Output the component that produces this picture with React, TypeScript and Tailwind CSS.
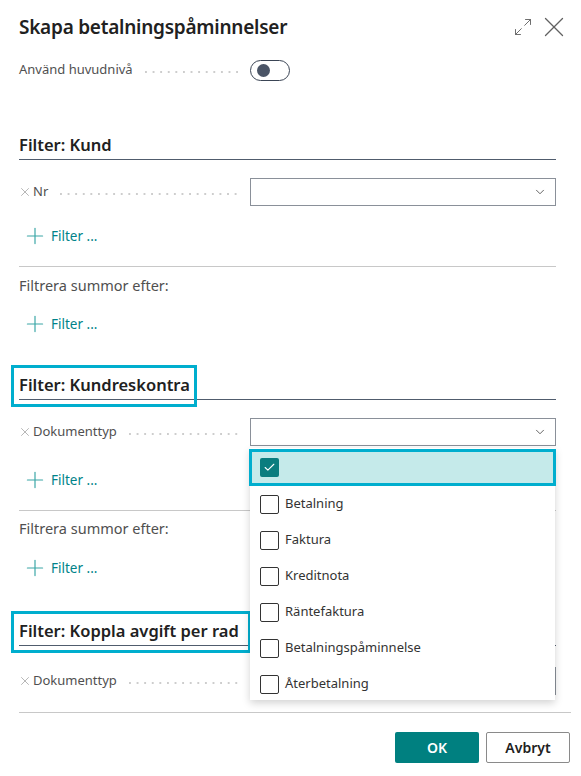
import { X, Maximize2, ChevronDown, Plus, Check } from 'lucide-react';

const font = { fontFamily: '"Segoe UI", "Noto Sans", sans-serif' };

function Leader() {
  return (
    <div className="flex-1 h-[2px] mt-[3px] ml-[12px] mr-2 bg-[linear-gradient(to_right,#cdcdcd_2px,transparent_2px)] bg-[length:7.6px_2px] bg-repeat-x" />
  );
}

function FieldRow({ label }: { label: string }) {
  return (
    <div className="flex items-center h-[28px]">
      <div className="flex items-center w-[231px]">
        <X className="w-[14px] h-[14px] text-[#8f8f8f] -ml-[1px] mr-[1px]" strokeWidth={1.1} />
        <span className="text-[13px] text-[#505050]">{label}</span>
        <Leader />
      </div>
      <div className="ml-auto w-[306px] h-[28px] border border-[#8a9099] flex items-center justify-end pr-[8px]">
        <ChevronDown className="w-[14px] h-[14px] text-[#333]" strokeWidth={1.3} />
      </div>
    </div>
  );
}

function AddFilter({ className = '' }: { className?: string }) {
  return (
    <div className={`flex items-center h-[28px] pl-[3px] text-[#00838a] ${className}`}>
      <Plus className="w-[26px] h-[26px] text-[#3aa6a6]" strokeWidth={1.1} />
      <span className="ml-[3px] text-[13.5px]">Filter ...</span>
    </div>
  );
}

function Heading({ title, boxWidth, className = '' }: { title: string; boxWidth?: number; className?: string }) {
  return (
    <div className={`relative border-b border-[#505c6d] pb-[2px] ${className}`}>
      <h2 className="text-[16.5px] leading-[24px] font-semibold text-[#212121]">{title}</h2>
      {boxWidth && (
        <div
          className="absolute left-[-8px] top-[-8px] h-[42px] border-[3px] border-[#00aece]"
          style={{ width: boxWidth }}
        />
      )}
    </div>
  );
}

const options = ['Betalning', 'Faktura', 'Kreditnota', 'Räntefaktura', 'Betalningspåminnelse', 'Återbetalning'];

export default function App() {
  return (
    <div className="relative w-[581px] h-[776px] bg-white overflow-hidden" style={font}>
      {/* header */}
      <div className="flex items-center h-[54px] pl-[19px] pr-[10px]">
        <h1 className="text-[19px] font-semibold text-[#212121] tracking-[-0.25px]">Skapa betalningspåminnelser</h1>
        <div className="ml-auto flex items-center gap-[4px] text-[#616161]">
          <Maximize2 className="w-[20px] h-[20px]" strokeWidth={1.1} />
          <X className="w-[34px] h-[34px]" strokeWidth={0.9} />
        </div>
      </div>

      <div className="pl-[19px] pr-[25px]">
        <div className="flex items-center h-[32px]">
          <div className="flex items-center w-[231px]">
            <span className="text-[13px] text-[#505050]">Använd huvudnivå</span>
            <Leader />
          </div>
          <div className="w-[40px] h-[21px] rounded-full border border-[#3b4555] flex items-center pl-[6px]">
            <div className="w-[13px] h-[13px] rounded-full bg-[#4b5567]" />
          </div>
        </div>

        <Heading title="Filter: Kund" className="mt-[47px]" />
        <div className="mt-[18px]">
          <FieldRow label="Nr" />
        </div>
        <AddFilter className="mt-[16px]" />
        <div className="mt-[16px] h-px bg-[#c8c8c8]" />
        <div className="mt-[9px] h-[20px] flex items-center text-[14.5px] text-[#505050]">Filtrera summor efter:</div>
        <AddFilter className="mt-[14px]" />

        <Heading title="Filter: Kundreskontra" boxWidth={186} className="mt-[35px]" />
        <div className="mt-[18px]">
          <FieldRow label="Dokumenttyp" />
        </div>
        <AddFilter className="mt-[20px]" />
        <div className="mt-[16px] h-px bg-[#c8c8c8]" />
        <div className="mt-[8px] h-[20px] flex items-center text-[14.5px] text-[#505050]">Filtrera summor efter:</div>
        <AddFilter className="mt-[15px]" />

        <Heading title="Filter: Koppla avgift per rad" boxWidth={240} className="mt-[37px]" />
        <div className="mt-[21px]">
          <FieldRow label="Dokumenttyp" />
        </div>
      </div>

      {/* footer */}
      <div className="ml-[19px] mr-[10px] mt-[17px] h-px bg-[#c8c8c8]" />
      <div className="flex justify-end gap-[7px] pr-[11px] mt-[19px]">
        <button className="w-[84px] h-[31px] rounded-[2px] bg-[#008080] text-white text-[14px] font-semibold">OK</button>
        <button className="w-[84px] h-[31px] rounded-[2px] border border-[#8a8a8a] bg-white text-[#212121] text-[14px] font-semibold">
          Avbryt
        </button>
      </div>

      {/* dropdown overlay */}
      <div className="absolute left-[250px] top-[448px] w-[305px] h-[252px] bg-white shadow-[0_3px_8px_rgba(0,0,0,0.18)] pt-[1px]">
        <div className="relative h-[37px] bg-[#c5eaea] border-[3px] border-[#00aece] -mx-[1px] flex items-center pl-[8px]">
          <div className="w-[19px] h-[19px] rounded-[2px] bg-[#0a7d7f] flex items-center justify-center">
            <Check className="w-[13px] h-[13px] text-white" strokeWidth={2} />
          </div>
        </div>
        {options.map((o) => (
          <div key={o} className="flex items-center h-[36px] pl-[10px]">
            <div className="w-[19px] h-[19px] rounded-[2px] border border-[#333]" />
            <span className="ml-[6px] text-[13px] text-[#333]">{o}</span>
          </div>
        ))}
      </div>
    </div>
  );
}
